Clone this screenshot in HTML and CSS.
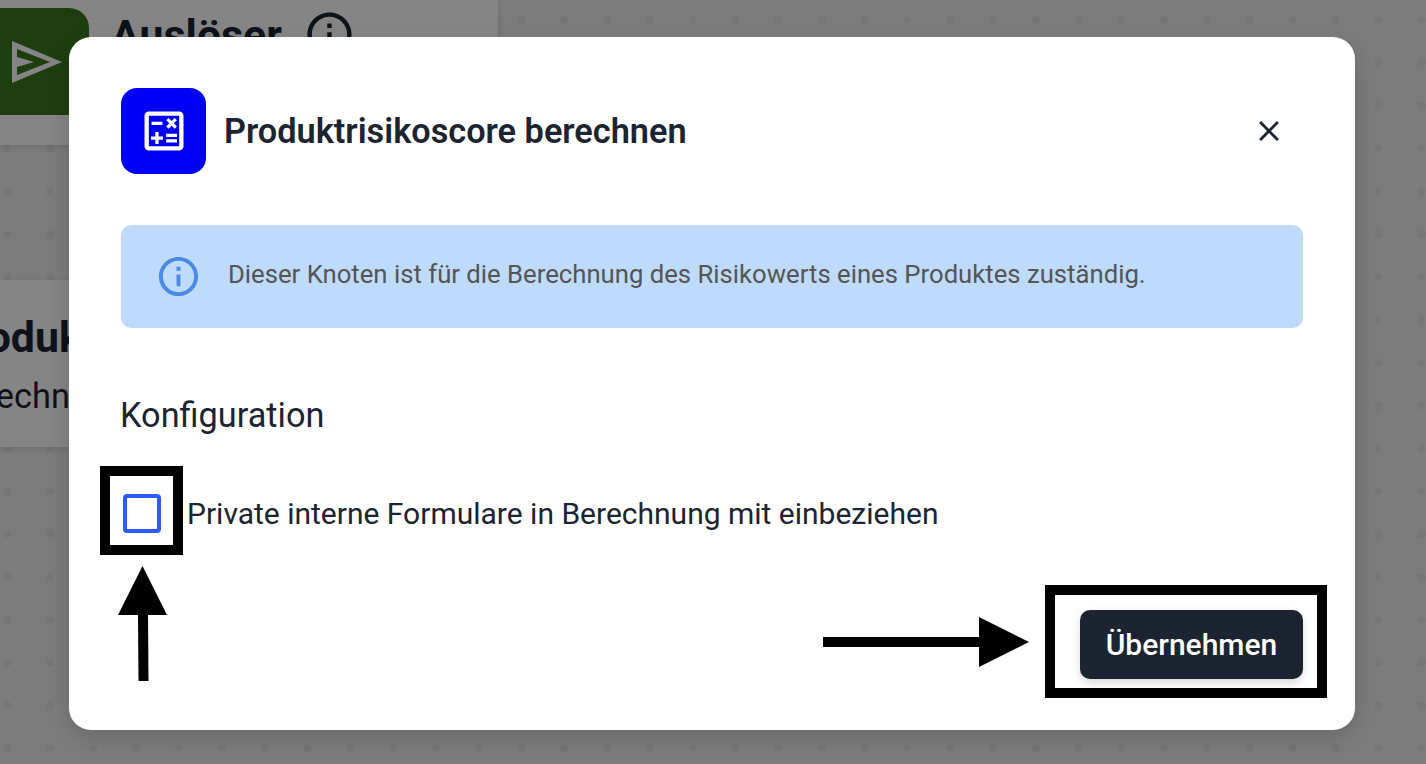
FILE: index.html
```html
<!DOCTYPE html>
<html lang="de">
<head>
    <meta charset="UTF-8">
    <meta name="viewport" content="width=device-width, initial-scale=1.0">
    <title>Produktrisikoscore berechnen</title>
    <link rel="stylesheet" href="styles.css">
</head>
<body>
    <div class="canvas">
        <div class="node node-trigger">
            <div class="node-icon">
                <svg class="send-icon" viewBox="0 0 50 42" width="50" height="42" fill="#fff" fill-rule="evenodd"><path d="M0 0L50 21 0 42zM5 8V16L22 21 5 26V34L38 21z"/></svg>
            </div>
            <div class="node-heading">
                <span class="node-title">Auslöser</span>
                <svg viewBox="0 0 24 24" width="53" height="53" fill="#1b2430"><path d="M11 7h2v2h-2zm0 4h2v6h-2zm1-9C6.48 2 2 6.48 2 12s4.48 10 10 10 10-4.48 10-10S17.52 2 12 2zm0 18c-4.41 0-8-3.59-8-8s3.59-8 8-8 8 3.59 8 8-3.59 8-8 8z"/></svg>
            </div>
        </div>
        <div class="node node-product">
            <div class="node-title">Produktrisikoscore</div>
            <div class="node-text">Berechnung</div>
        </div>
    </div>

    <div class="overlay">
        <div class="modal">
            <div class="modal-header">
                <div class="modal-icon">
                    <svg viewBox="0 0 24 24" width="52" height="52" fill="#fff"><path d="M19 3H5c-1.1 0-2 .9-2 2v14c0 1.1.9 2 2 2h14c1.1 0 2-.9 2-2V5c0-1.1-.9-2-2-2zm0 16H5V5h14v14z"/><path d="M6.25 7.72h5v1.5h-5zM13 15.75h5v1.5h-5zM13 13.25h5v1.5h-5zM8 18h1.5v-2h2v-1.5h-2v-2H8v2H6V16h2zM14.09 10.95l1.41-1.41 1.41 1.41 1.06-1.06-1.41-1.42 1.41-1.41L16.91 6 15.5 7.41 14.09 6l-1.06 1.06 1.41 1.41-1.41 1.42z"/></svg>
                </div>
                <h2 class="modal-title">Produktrisikoscore berechnen</h2>
                <svg class="modal-close" viewBox="0 0 24 24" width="34" height="34" fill="#1b2430"><path d="M19 6.41L17.59 5 12 10.59 6.41 5 5 6.41 10.59 12 5 17.59 6.41 19 12 13.41 17.59 19 19 17.59 13.41 12z"/></svg>
            </div>

            <div class="info-box">
                <svg viewBox="0 0 24 24" width="47" height="47" fill="#4a8ae6"><path d="M11 7h2v2h-2zm0 4h2v6h-2zm1-9C6.48 2 2 6.48 2 12s4.48 10 10 10 10-4.48 10-10S17.52 2 12 2zm0 18c-4.41 0-8-3.59-8-8s3.59-8 8-8 8 3.59 8 8-3.59 8-8 8z"/></svg>
                <span class="info-text">Dieser Knoten ist für die Berechnung des Risikowerts eines Produktes zuständig.</span>
            </div>

            <h3 class="section-title">Konfiguration</h3>

            <div class="check-row">
                <span class="checkbox"></span>
                <span class="check-label">Private interne Formulare in Berechnung mit einbeziehen</span>
            </div>

            <div class="modal-footer">
                <button class="btn-apply">Übernehmen</button>
            </div>
        </div>
    </div>

    <!-- annotations drawn on top of the screenshot -->
    <div class="mark mark-check"></div>
    <div class="mark mark-button"></div>
    <svg class="arrow arrow-up" width="50" height="116" viewBox="0 0 50 116"><polygon points="24.5,0 49,49 0,49"/><polygon points="20,48 30,48 30.500,115 20.500,115"/></svg>
    <svg class="arrow arrow-right" width="206" height="50" viewBox="0 0 206 50"><rect x="0" y="20" width="157" height="10"/><polygon points="156,0 206,25 156,50"/></svg>
</body>
</html>
```

FILE: styles.css
```css
* {
    box-sizing: border-box;
}
html, body {
    margin: 0;
    height: 100%;
}
body {
    position: relative;
    overflow: hidden;
    font-family: Roboto, "Liberation Sans", sans-serif;
    color: #1b2430;
    background-color: #eeeeee;
    background-image: radial-gradient(circle, #e3e3e3 3px, transparent 5px);
    background-size: 42.85px 42.85px;
    background-position: -14px -1.4px;
}

/* editor behind the dialog */
.canvas {
    width: 498px;
}
.node {
    background: #fff;
    box-shadow: 0 2px 8px rgba(0, 0, 0, 0.12);
}
.node-trigger {
    display: flex;
    height: 145px;
    padding-top: 8px;
}
.node-icon {
    display: flex;
    align-items: center;
    justify-content: center;
    flex: none;
    width: 107px;
    height: 107px;
    margin-left: -18px;
    background: #3a7820;
    border-radius: 20px;
}
.send-icon {
    margin-left: 3px;
}
.node-heading {
    display: flex;
    align-items: flex-start;
    gap: 21px;
    margin-left: 22px;
}
.node-title {
    font-size: 42.85px;
    font-weight: 700;
    line-height: 54px;
    white-space: nowrap;
}
.node-product {
    height: 167px;
    margin-top: 135px;
    padding-top: 30px;
}
.node-product .node-title {
    margin-left: -56px;
}
.node-text {
    margin-top: 12px;
    margin-left: -55px;
    font-size: 34.3px;
    white-space: nowrap;
}

/* dialog */
.overlay {
    position: absolute;
    inset: 0;
    padding: 37px 71px 34px 69px;
    background: rgba(0, 0, 0, 0.48);
}
.modal {
    height: 100%;
    padding: 51px 52px 0;
    background: #fff;
    border-radius: 22px;
    box-shadow: 0 8px 24px rgba(0, 0, 0, 0.15);
}
.modal-header {
    display: flex;
    align-items: center;
    height: 86px;
}
.modal-icon {
    display: flex;
    align-items: center;
    justify-content: center;
    width: 85px;
    height: 86px;
    background: #0000f5;
    border-radius: 16px;
}
.modal-title {
    flex: 1;
    margin: 0 0 0 18px;
    font-size: 34.3px;
    font-weight: 600;
}
.modal-close {
    margin-right: 17px;
}
.info-box {
    display: flex;
    align-items: center;
    gap: 26px;
    height: 103px;
    margin-top: 51px;
    padding-left: 34px;
    background: #bfdbfb;
    border-radius: 10px;
}
.info-text {
    margin-top: -6px;
    font-size: 25.7px;
    color: #555;
}
.section-title {
    margin: 67px 0 0 -1px;
    font-size: 34.3px;
    font-weight: 400;
    line-height: 40px;
}
.check-row {
    display: flex;
    align-items: center;
    gap: 26px;
    margin-top: 59px;
    margin-left: 2px;
}
.checkbox {
    width: 38px;
    height: 39px;
    border: 4px solid #2a5cff;
    border-radius: 4px;
}
.check-label {
    font-size: 30px;
}
.modal-footer {
    display: flex;
    justify-content: flex-end;
    margin-top: 77px;
}
.btn-apply {
    width: 223px;
    height: 69px;
    font-family: inherit;
    font-size: 30px;
    font-weight: 500;
    color: #fff;
    background: #1b2430;
    border: none;
    border-radius: 10px;
    box-shadow: 0 4px 10px rgba(0, 0, 0, 0.15);
}

/* annotations */
.mark {
    position: absolute;
    border: 10px solid #000;
}
.mark-check {
    left: 100px;
    top: 466px;
    width: 83px;
    height: 89px;
}
.mark-button {
    left: 1045px;
    top: 585px;
    width: 282px;
    height: 113px;
}
.arrow {
    position: absolute;
    fill: #000;
}
.arrow-up {
    left: 118px;
    top: 566px;
}
.arrow-right {
    left: 823px;
    top: 617px;
}
```
